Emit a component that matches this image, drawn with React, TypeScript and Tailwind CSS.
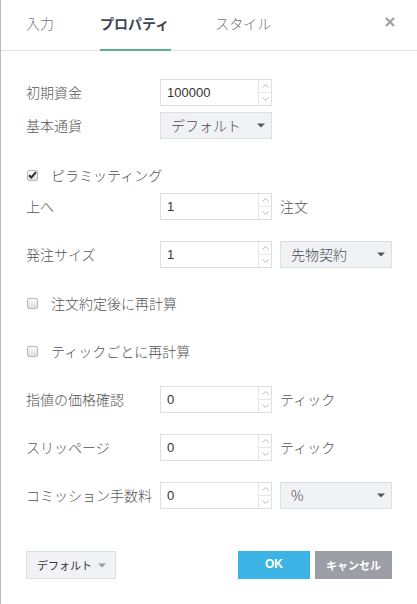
import React, { useState } from 'react';

const jp = "font-['Noto_Sans_CJK_JP','Noto_Sans',sans-serif]";
const num = "font-['Liberation_Sans','Noto_Sans_CJK_JP',sans-serif]";

const Caret = ({ color = '#555' }: { color?: string }) => (
    <svg width="8" height="5" viewBox="0 0 8 5">
        <path d="M0 0.5 L8 0.5 L4 4.5 Z" fill={color} />
    </svg>
);

const NumberField = ({ value }: { value: string }) => (
    <div className="flex h-[27px] w-[112px] border border-[#dcdfe4] bg-white">
        <div className={`flex flex-1 items-center pl-[6px] text-[13px] text-[#333] ${num}`}>{value}</div>
        <div className="flex w-[13px] flex-col border-l border-[#e4e6ea]">
            <div className="flex flex-1 items-center justify-center border-b border-[#e4e6ea]">
                <svg width="7" height="4" viewBox="0 0 7 4">
                    <path d="M0.5 3.5 L3.5 0.5 L6.5 3.5" stroke="#b9bdc4" strokeWidth="1" fill="none" />
                </svg>
            </div>
            <div className="flex flex-1 items-center justify-center">
                <svg width="7" height="4" viewBox="0 0 7 4">
                    <path d="M0.5 0.5 L3.5 3.5 L6.5 0.5" stroke="#b9bdc4" strokeWidth="1" fill="none" />
                </svg>
            </div>
        </div>
    </div>
);

const SelectBox = ({ value }: { value: string }) => (
    <div className="flex h-[27px] w-[112px] items-center justify-between border border-[#dcdfe4] bg-[#f1f2f6] pl-[10px] pr-[6px]">
        <span className={`text-[14px] font-light text-[#4a4a4a] ${jp}`}>{value}</span>
        <Caret />
    </div>
);

const Checkbox = ({ checked, label }: { checked: boolean; label: string }) => (
    <div className="flex h-[20px] items-center">
        <div className="ml-[1px] flex h-[11px] w-[11px] items-center justify-center rounded-[2px] border border-[#b7b9bc] bg-gradient-to-b from-[#fbfbfb] to-[#dedede]">
            {checked && (
                <svg width="9" height="8" viewBox="0 0 9 8">
                    <path d="M1 4.2 L3.4 6.5 L8 1.2" stroke="#2f2f2f" strokeWidth="2" fill="none" />
                </svg>
            )}
        </div>
        <span className={`ml-[13px] text-[14px] font-light text-[#555] ${jp}`}>{label}</span>
    </div>
);

const Row = ({ label, children, className = '' }: { label: string; children: React.ReactNode; className?: string }) => (
    <div className={`flex h-[27px] items-center ${className}`}>
        <div className={`w-[134px] text-[14px] font-light text-[#555] ${jp}`}>{label}</div>
        {children}
    </div>
);

const Unit = ({ text }: { text: string }) => (
    <span className={`ml-[8px] text-[14px] font-light text-[#555] ${jp}`}>{text}</span>
);

export default function App() {
    const [tab, setTab] = useState(1);
    const tabs = ['入力', 'プロパティ', 'スタイル'];

    return (
        <div className="h-[604px] w-full border-l border-[#bcbcbc] bg-white">
            {/* Header */}
            <div className="flex h-[51px] items-stretch justify-between border-b border-[#e1e3e7] pl-[25px] pr-[22px]">
                <div className="flex gap-[46px]">
                    {tabs.map((t, i) => (
                        <button
                            key={t}
                            onClick={() => setTab(i)}
                            className={`relative flex items-center pb-[4px] text-[14px] ${jp} ${
                                i === tab ? 'font-bold text-[#404754]' : 'font-light text-[#6f747c]'
                            }`}
                        >
                            {t}
                            {i === tab && <span className="absolute bottom-[-1px] left-0 right-[-2px] h-[2px] bg-[#56b886]" />}
                        </button>
                    ))}
                </div>
                <button className="flex items-center pb-[6px]">
                    <svg width="10" height="10" viewBox="0 0 10 10">
                        <path d="M1 1 L9 9 M9 1 L1 9" stroke="#a0a3aa" strokeWidth="2.4" />
                    </svg>
                </button>
            </div>

            {/* Body */}
            <div className="flex flex-col pl-[25px] pr-[25px] pt-[28px]">
                <Row label="初期資金">
                    <NumberField value="100000" />
                </Row>
                <Row label="基本通貨" className="mt-[6px]">
                    <SelectBox value="デフォルト" />
                </Row>
                <div className="mt-[26px]">
                    <Checkbox checked label="ピラミッティング" />
                </div>
                <Row label="上へ" className="mt-[8px]">
                    <NumberField value="1" />
                    <Unit text="注文" />
                </Row>
                <Row label="発注サイズ" className="mt-[21px]">
                    <NumberField value="1" />
                    <div className="ml-[8px]">
                        <SelectBox value="先物契約" />
                    </div>
                </Row>
                <div className="mt-[25px]">
                    <Checkbox checked={false} label="注文約定後に再計算" />
                </div>
                <div className="mt-[28px]">
                    <Checkbox checked={false} label="ティックごとに再計算" />
                </div>
                <Row label="指値の価格確認" className="mt-[25px]">
                    <NumberField value="0" />
                    <Unit text="ティック" />
                </Row>
                <Row label="スリッページ" className="mt-[21px]">
                    <NumberField value="0" />
                    <Unit text="ティック" />
                </Row>
                <Row label="コミッション手数料" className="mt-[21px]">
                    <NumberField value="0" />
                    <div className="ml-[8px]">
                        <SelectBox value="%" />
                    </div>
                </Row>

                {/* Footer */}
                <div className="mt-[42px] flex items-center justify-between">
                    <button className="flex h-[28px] w-[90px] items-center justify-between border border-[#dcdfe4] bg-[#f1f2f6] pl-[10px] pr-[9px]">
                        <span className={`text-[11px] text-[#333] ${jp}`}>デフォルト</span>
                        <Caret color="#9a9a9a" />
                    </button>
                    <div className="flex gap-[5px]">
                        <button className={`h-[28px] w-[72px] bg-[#3bb3e4] pb-[3px] text-[12px] font-bold text-white ${num}`}>
                            OK
                        </button>
                        <button className={`h-[28px] w-[77px] bg-[#9c9ea5] text-[11px] font-bold text-white ${jp}`}>
                            キャンセル
                        </button>
                    </div>
                </div>
            </div>
        </div>
    );
}
